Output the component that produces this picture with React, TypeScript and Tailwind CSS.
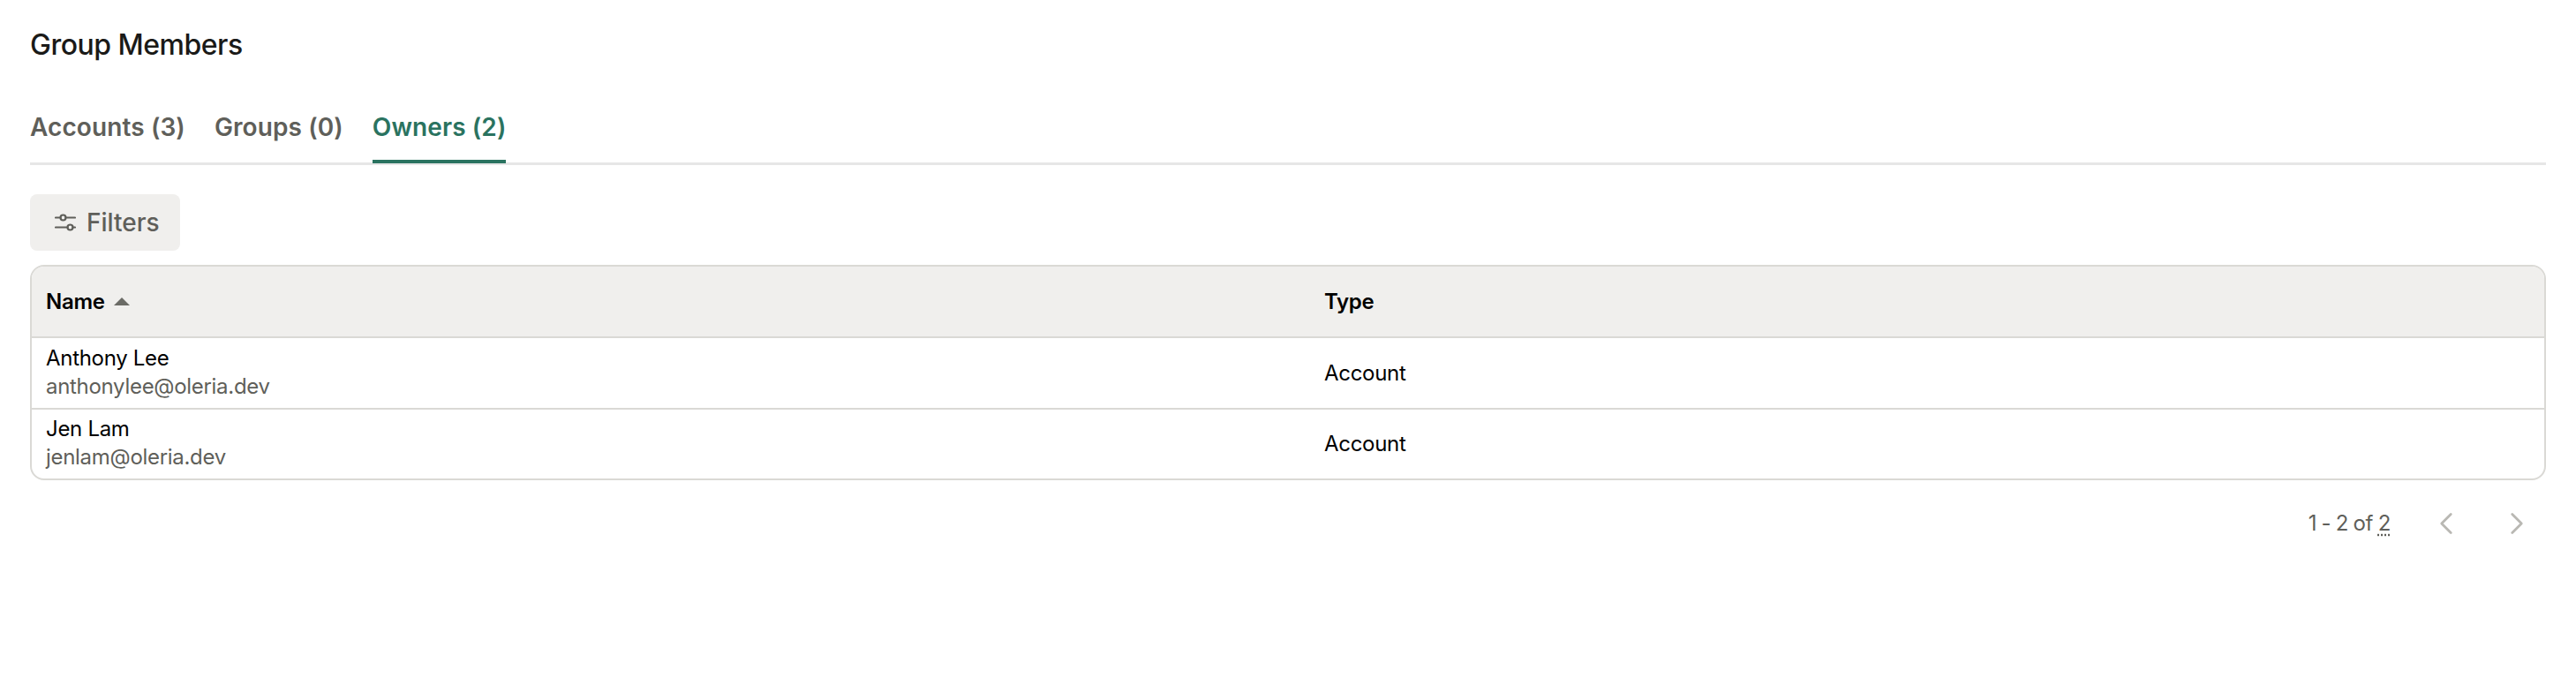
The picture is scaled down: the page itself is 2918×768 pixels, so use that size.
import { ChevronLeft, ChevronRight } from "lucide-react";

const tabs = [
  { label: "Accounts (3)", active: false },
  { label: "Groups (0)", active: false },
  { label: "Owners (2)", active: true },
];

const owners = [
  { name: "Anthony Lee", email: "anthonylee@oleria.dev" },
  { name: "Jen Lam", email: "jenlam@oleria.dev" },
];

function FiltersIcon() {
  return (
    <svg width="24" height="20" viewBox="0 0 24 20" fill="none" stroke="currentColor" strokeWidth="2.2" strokeLinecap="round">
      <path d="M1 4.5h5.5M12.5 4.5H23M1 15.5h13.5M20.5 15.5H23" />
      <circle cx="9.5" cy="4.5" r="3" />
      <circle cx="17.5" cy="15.5" r="3" />
    </svg>
  );
}

export default function App() {
  return (
    <div className="min-h-[768px] bg-white px-[34px] pt-[31px] font-['Inter',sans-serif] tracking-[-0.3px] text-black">
      <h1 className="text-[32px] leading-[40px] font-medium tracking-[-0.5px] text-[#1a1a18]">Group Members</h1>

      <div className="mt-[53px] flex gap-[33px] border-b-[3px] border-[#e6e6e6]">
        {tabs.map((tab) => (
          <button
            key={tab.label}
            className={`-mb-[1px] h-[61px] border-b-[4px] pb-[18px] text-[28px] leading-[36px] font-semibold tracking-[0.1px] ${
              tab.active ? "border-[#2a7360] text-[#2a7360]" : "border-transparent text-[#5f5f5a]"
            }`}
          >
            {tab.label}
          </button>
        ))}
      </div>

      <button className="mt-[33px] flex h-[64px] w-[170px] items-center gap-[12px] rounded-[8px] bg-[#f0efed] pl-[28px] text-[28px] font-medium tracking-normal text-[#5f5f5a]">
        <FiltersIcon />
        Filters
      </button>

      <div className="mt-[16px] overflow-hidden rounded-[16px] border-2 border-[#dad9d5]">
        <table className="w-full table-fixed border-collapse text-[24px]">
          <thead>
            <tr className="h-[80px] border-b-2 border-[#dad9d5] bg-[#f0efed] text-left">
              <th className="w-[1446px] pl-[16px] font-semibold">
                <span className="flex items-center gap-[10px]">
                  Name
                  <span className="h-0 w-0 border-x-[9px] border-b-[9px] border-x-transparent border-b-[#6b6b66]" />
                </span>
              </th>
              <th className="pl-[18px] font-semibold">Type</th>
            </tr>
          </thead>
          <tbody>
            {owners.map((owner, i) => (
              <tr key={owner.email} className={i === 0 ? "h-[81px] border-b-2 border-[#dad9d5]" : "h-[79px]"}>
                <td className="pb-[2px] pl-[16px] leading-[32px]">
                  <div>{owner.name}</div>
                  <div className="text-[#5f5f5a]">{owner.email}</div>
                </td>
                <td className="pl-[18px]">Account</td>
              </tr>
            ))}
          </tbody>
        </table>
      </div>

      <div className="mt-[28px] flex items-center justify-end pr-[12px] text-[24px] text-[#5f5f5a] [word-spacing:-1px]">
        <span>
          1 - 2 of <span className="underline decoration-dotted underline-offset-4">2</span>
        </span>
        <ChevronLeft className="ml-[42px] text-[#b9b8b3]" size={42} strokeWidth={1.6} />
        <ChevronRight className="ml-[38px] text-[#b9b8b3]" size={42} strokeWidth={1.6} />
      </div>
    </div>
  );
}
